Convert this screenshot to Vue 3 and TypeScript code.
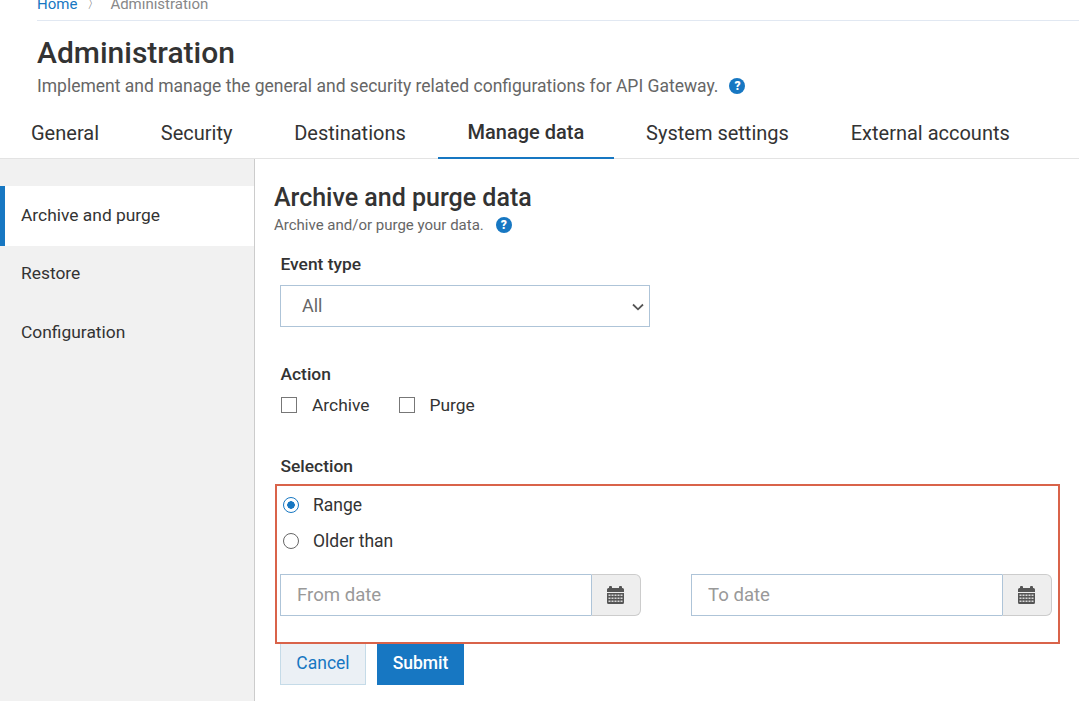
<script setup lang="ts">
import { ref } from 'vue'

const tabs: string[] = ['General', 'Security', 'Destinations', 'Manage data', 'System settings', 'External accounts']
const navItems: string[] = ['Archive and purge', 'Restore', 'Configuration']
const eventType = ref<string>('All')
const selection = ref<string>('range')
const dates: string[] = ['From date', 'To date']
</script>

<template>
  <div class="page">
    <header class="head">
      <nav class="crumbs">
        <a class="crumb-link">Home</a>
        <span class="crumb-sep">〉</span>
        <span class="crumb-current">Administration</span>
      </nav>
      <h1 class="title">Administration</h1>
      <p class="desc">
        Implement and manage the general and security related configurations for API Gateway.
        <span class="help help-top">?</span>
      </p>
    </header>

    <div class="tabs">
      <div v-for="tab in tabs" :key="tab" class="tab" :class="{ active: tab === 'Manage data' }">{{ tab }}</div>
    </div>

    <div class="body">
      <aside class="side">
        <div v-for="(item, i) in navItems" :key="item" class="side-item" :class="{ active: i === 0 }">{{ item }}</div>
      </aside>

      <main class="main">
        <h2 class="main-title">Archive and purge data</h2>
        <p class="main-desc">Archive and/or purge your data. <span class="help help-sub">?</span></p>

        <div class="form">
          <label class="label label-event">Event type</label>
          <div class="select-wrap">
            <select v-model="eventType" class="select">
              <option>All</option>
            </select>
            <svg class="chevron" width="12" height="8" viewBox="0 0 12 8" aria-hidden="true">
              <path d="M1 1.500 L6 6.300 L11 1.500" fill="none" stroke="#555" stroke-width="1.800" />
            </svg>
          </div>

          <div class="label label-action">Action</div>
          <div class="checks">
            <label class="check"><input type="checkbox" class="box" /><span>Archive</span></label>
            <label class="check"><input type="checkbox" class="box" /><span>Purge</span></label>
          </div>

          <div class="label label-selection">Selection</div>
        </div>

        <section class="selection">
          <label class="radio">
            <input v-model="selection" type="radio" value="range" class="dot" /><span>Range</span>
          </label>
          <label class="radio">
            <input v-model="selection" type="radio" value="older" class="dot" /><span>Older than</span>
          </label>
          <div class="dates">
            <div v-for="d in dates" :key="d" class="date">
              <input class="date-input" type="text" :placeholder="d" />
              <span class="date-addon">
                <svg width="17" height="18" viewBox="0 0 17 18" aria-hidden="true">
                  <path fill="#555" d="M0 3.5 Q0 2 1.500 2 H2 V1 Q2 0 3 0 H4 Q5 0 5 1 V2 H12 V1 Q12 0 13 0 H14 Q15 0 15 1 V2 H15.500 Q17 2 17 3.500 V16.500 Q17 18 15.500 18 H1.500 Q0 18 0 16.500 Z" />
                  <g fill="#d8d8d8">
                    <rect x="0" y="6" width="17" height="1" fill="#eee" />
                    <template v-for="r in [8.500, 11.500, 14.500]" :key="r">
                      <rect v-for="c in [1.500, 4.500, 7.500, 10.500, 13.500]" :key="c" :x="c" :y="r" width="2" height="1.500" />
                    </template>
                  </g>
                </svg>
              </span>
            </div>
          </div>
        </section>

        <div class="actions">
          <button type="button" class="btn btn-cancel">Cancel</button>
          <button type="button" class="btn btn-submit">Submit</button>
        </div>
      </main>
    </div>
  </div>
</template>

<style>
html, body { margin: 0; overflow: hidden; background: #fff; }
</style>

<style scoped>
.page {
  width: 1079px;
  height: 701px;
  overflow: hidden;
  display: flex;
  flex-direction: column;
  font-family: Roboto, "Liberation Sans", sans-serif;
  color: #333;
}
.head { padding-left: 37px; }
.crumbs {
  height: 20px;
  box-sizing: content-box;
  border-bottom: 1px solid #e1e8f2;
  display: flex;
  align-items: flex-end;
  font-size: 15px;
  line-height: 20px;
}
.crumbs > * { position: relative; top: -6px; }
.crumb-link { color: #1777c2; }
.crumb-sep { color: #666; width: 33px; text-align: center; font-size: 13px; }
.crumb-current { color: #888; }
.title {
  margin: 12px 0 0;
  font-size: 30px;
  line-height: 40px;
  font-weight: 500;
  color: #333;
}
.desc {
  margin: 1px 0 0;
  font-size: 17.500px;
  line-height: 24px;
  color: #666;
  display: flex;
  align-items: center;
  gap: 11px;
}
.help {
  display: inline-block;
  border-radius: 50%;
  background: #1777c2;
  color: #fff;
  font-weight: 900;
  text-align: center;
}
.help-top, .help-sub { width: 16px; height: 16px; font-size: 12px; line-height: 16px; }
.tabs {
  margin-top: 10px;
  height: 50px;
  display: flex;
  gap: 1.800px;
  padding-left: 1px;
  border-bottom: 1px solid #e3e3e3;
  box-sizing: content-box;
}
.tab {
  padding: 0 30px;
  font-size: 20px;
  line-height: 50px;
  height: 50px;
  box-sizing: border-box;
  color: #333;
}
.tab.active {
  font-weight: 500;
  border-bottom: 2px solid #1777c2;
  height: 51px;
  line-height: 49px;
}
.body { flex: 1; display: flex; min-height: 0; }
.side {
  width: 254px;
  background: #f1f1f1;
  border-right: 1px solid #ccc;
  padding-top: 27px;
  flex: none;
}
.side-item {
  height: 59px;
  line-height: 55px;
  padding-left: 21px;
  font-size: 17.400px;
  color: #333;
}
.side-item.active {
  height: 60px;
  line-height: 58px;
  background: #fff;
  padding-left: 16px;
  border-left: 5px solid #1777c2;
}
.main { flex: 1; padding: 0 20px 0 19px; min-width: 0; }
.main-title {
  margin: 24px 0 0;
  font-size: 25px;
  line-height: 30px;
  font-weight: 500;
  color: #333;
}
.main-desc {
  margin: 2px 0 0;
  font-size: 15px;
  line-height: 20px;
  color: #666;
  display: flex;
  align-items: center;
  gap: 12px;
}
.form { padding-left: 6px; }
.label { font-size: 17.400px; font-weight: 500; line-height: 20px; color: #333; padding-left: 0.500px; }
.label-event { display: block; margin-top: 19px; }
.select-wrap { position: relative; width: 370px; margin-top: 11px; }
.select {
  display: block;
  width: 370px;
  height: 42px;
  padding: 0 21px 2px;
  border: 1px solid #aec4d8;
  border-radius: 0;
  background: #fff;
  color: #666;
  appearance: none;
  font: 18px Roboto, "Liberation Sans", sans-serif;
}
.chevron { position: absolute; right: 6px; top: 18px; pointer-events: none; }
.label-action { margin-top: 37px; }
.checks { display: flex; gap: 29px; margin-top: 10px; height: 22px; padding-left: 1px; }
.check { display: flex; align-items: center; gap: 15px; font-size: 17.400px; color: #333; }
.box {
  appearance: none;
  margin: 0;
  width: 16px;
  height: 16px;
  border: 1px solid #777;
  background: #fff;
  border-radius: 0;
  box-sizing: border-box;
}
.label-selection { margin-top: 40px; }
.selection {
  margin: 8px 0 0 1px;
  width: 785px;
  height: 160px;
  box-sizing: border-box;
  border: 2px solid #d9634a;
  padding: 1px 6px 0 3px;
  position: relative;
  z-index: 1;
}
.radio { display: flex; align-items: center; gap: 14px; height: 36px; padding-left: 3px; font-size: 17.500px; color: #333; }
.dot {
  appearance: none;
  margin: 0;
  width: 16px;
  height: 16px;
  border-radius: 50%;
  border: 1px solid #666;
  background: #fff;
  box-sizing: border-box;
}
.dot:checked {
  border-color: #1777c2;
  background: radial-gradient(circle, #1777c2 0 3.500px, #fff 4px);
}
.dates { display: flex; justify-content: space-between; margin-top: 15px; }
.date { display: flex; width: 361px; height: 42px; }
.date-input {
  flex: 1;
  min-width: 0;
  height: 42px;
  box-sizing: border-box;
  border: 1px solid #aec4d8;
  border-right: none;
  padding: 0 16px;
  font: 18.600px Roboto, "Liberation Sans", sans-serif;
  color: #333;
  outline: none;
  border-radius: 0;
}
.date-input::placeholder { color: #999; opacity: 1; }
.date-addon {
  width: 50px;
  height: 42px;
  box-sizing: border-box;
  display: flex;
  align-items: center;
  justify-content: center;
  padding-right: 1px;
  background: #eee;
  border: 1px solid #ccc;
  border-left: 1px solid #aec4d8;
  border-radius: 0 6px 6px 0;
}
.actions { display: flex; gap: 11px; padding-left: 6px; margin-top: -1px; }
.btn {
  height: 42px;
  box-sizing: border-box;
  font: 17.500px Roboto, "Liberation Sans", sans-serif;
  border-radius: 0;
  padding: 0 0 2px;
}
.btn-cancel { width: 86px; background: #ebf0f5; border: 1px solid #c5dbe8; color: #1777c2; }
.btn-submit { width: 87px; background: #1777c2; border: 1px solid #1777c2; color: #fff; font-weight: 500; }
</style>
